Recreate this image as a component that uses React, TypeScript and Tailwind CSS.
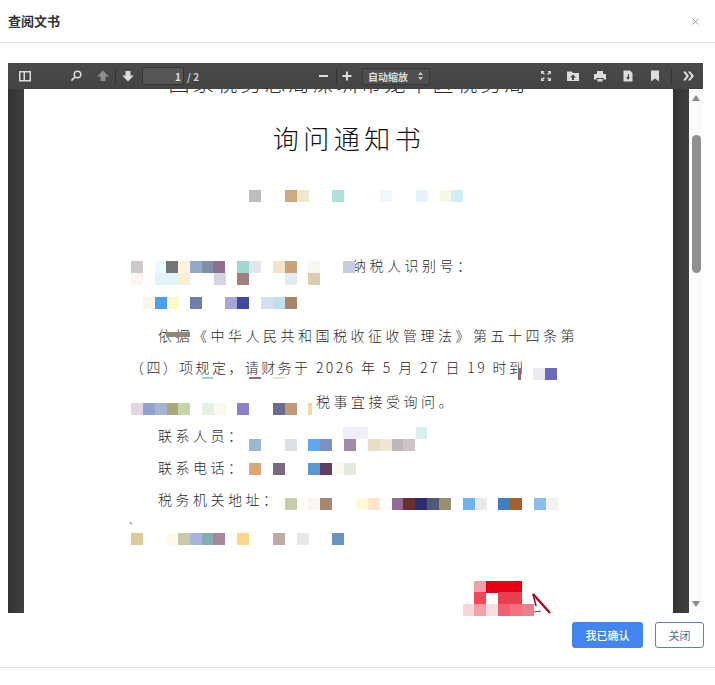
import { X } from "lucide-react";

type Block = [number, number, string, number?, number?];

// pixelated redaction over the scanned document: x, y, colour, w, h
const blocks: Block[] = [
  [249, 190, "#bdbdbd"], [285, 190, "#cfa97f"], [297, 190, "#f3e6cf"], [332, 190, "#aee0dc"],
  [380, 190, "#f0f8fb"], [416, 190, "#e6f1f8"], [440, 190, "#f8f6e4"], [451, 190, "#d0eef5"],

  [131, 261, "#cdc8cc"], [155, 261, "#e9fbfd"], [166, 261, "#757575"], [178, 261, "#fdf3e0"],
  [190, 261, "#94aacb"], [202, 261, "#7f8fa8"], [213, 261, "#8d6f92"], [237, 261, "#a0d8d0"],
  [249, 261, "#e2e6ea"], [273, 261, "#f2e4c8"], [285, 261, "#c8a27a"], [308, 261, "#f8f6f0"],
  [343, 261, "#c5cce3"],

  [131, 273, "#fdf6f0"], [155, 273, "#dff5f8"], [167, 273, "#dff5f8"], [178, 273, "#faeed8"],
  [214, 273, "#d3d5e2"], [237, 273, "#a27f7e"], [285, 273, "#e3ebf2"], [308, 273, "#dcccb0"],

  [143, 297, "#fbf6ea"], [155, 297, "#4f9df0"], [167, 297, "#fdf9c8"], [190, 297, "#6f80ab"],
  [225, 297, "#a9a5d6"], [237, 297, "#3f49a0"], [261, 297, "#d3e0f2"], [273, 297, "#bfe0ea"],
  [285, 297, "#a98468"],

  [166, 332, "#8f8a78", 24, 5],
  [202, 377, "#a6c8cf", 11, 2], [249, 377, "#9c6b70", 12, 2], [273, 377, "#e5e5d0", 12, 2],
  [518, 368, "#8a6d7a", 3], [533, 368, "#ececf0"], [545, 368, "#6a6ab8"],

  [131, 403, "#e3d5e2"], [143, 403, "#8fa4cc"], [155, 403, "#a6b4d6"], [167, 403, "#a8a878"],
  [178, 403, "#c5d5a8"], [202, 403, "#e3f0e3"], [215, 403, "#fbf9ee"], [237, 403, "#8d80c8"],
  [273, 403, "#6b6b8e"], [285, 403, "#c09878"], [308, 403, "#eedca0", 4],

  [343, 427, "#f0eef8", 25], [416, 427, "#d8f0f2", 11],
  [249, 439, "#9ab8d2"], [285, 439, "#dcdfe3"], [308, 439, "#5fa8f0"], [320, 439, "#7f90c0"],
  [344, 439, "#a58aa5"], [368, 439, "#e8dcc8"], [380, 439, "#f0e6d2"], [392, 439, "#bcb8bc"],
  [403, 439, "#cdc4c8"],

  [249, 463, "#d8a878"], [273, 463, "#7a6a80"], [308, 463, "#5b98d0"], [320, 463, "#5c3f62"],
  [333, 463, "#fdf9f0"], [344, 463, "#e5e8dc"],

  [285, 498, "#c5cbae"], [308, 498, "#fbf5f0"], [320, 498, "#a58870"], [356, 498, "#fef9dc"],
  [368, 498, "#fde4cc"], [392, 498, "#906a90"], [403, 498, "#6a3030"], [415, 498, "#2c2c70"],
  [427, 498, "#505878"], [439, 498, "#989070"], [463, 498, "#6cb4f0"], [475, 498, "#e5e8ec"],
  [498, 498, "#3f7fc0"], [510, 498, "#a85f30"], [534, 498, "#8cbcea"], [546, 498, "#f5f2ee"],

  [131, 533, "#e0c898"], [167, 533, "#fdfbe8"], [178, 533, "#c8c8ac"], [190, 533, "#a8b4dc"],
  [202, 533, "#88acb4"], [213, 533, "#a88898"], [237, 533, "#fad888"], [273, 533, "#c0aaa8"],
  [297, 533, "#e8e8e8"], [332, 533, "#6a94c0"],

  // stamp
  [474, 581, "#f0a0a8"], [486, 581, "#e60012", 36],
  [474, 592, "#f04858"], [498, 592, "#e84050"], [510, 592, "#e84050"],
  [463, 604, "#fad4d6"], [474, 604, "#f8a0a8"], [486, 604, "#fbdde0"], [498, 604, "#f06070"],
  [510, 604, "#f87080"], [522, 604, "#e88090"],
];

function Mosaic() {
  return (
    <svg className="pointer-events-none absolute left-0 top-0" width="715" height="685" aria-hidden>
      {blocks.map(([x, y, fill, w = 12, h = 12], i) => (
        <rect key={i} x={x} y={y} width={w} height={h} fill={fill} />
      ))}
      <path d="M533 594 L550 613" stroke="#a01020" strokeWidth="2.5" fill="none" />
      <path d="M533 594 L536 606" stroke="#a01020" strokeWidth="1.5" fill="none" />
      <path d="M534 612 L541 611" stroke="#55343a" strokeWidth="1" fill="none" />
    </svg>
  );
}

function Icon({ children, w = 14 }: { children: React.ReactNode; w?: number }) {
  return (
    <svg width={w} height="14" viewBox="0 0 14 14" fill="#dcdcdc" className="shrink-0">
      {children}
    </svg>
  );
}

function Toolbar() {
  return (
    <div className="flex h-[26px] shrink-0 items-center bg-gradient-to-b from-[#4a4a4a] to-[#444444] pl-[10px] pr-[8px] shadow-[0_1px_0_#9a9a9a]">
      <Icon>
        <path fillRule="evenodd" d="M1 2h12v10.500H1zM2.500 3.500v7.500h3V3.500zM7 3.500v7.500h4.500V3.500z" />
      </Icon>
      <div className="ml-[37px]">
        <Icon>
          <path d="M8.500 1.500a4 4 0 1 0 0 8 4 4 0 0 0 0-8zm0 1.500a2.500 2.500 0 1 1 0 5 2.500 2.500 0 0 1 0-5z" />
          <path d="M5.300 7.600l1.100 1.100-3.300 3.500-1.300-1.200z" />
        </Icon>
      </div>
      <div className="ml-[13px]">
        <Icon>
          <path fill="#8e8e8e" d="M7 1.500l5.800 6H9.500V12h-5V7.500H1.200z" />
        </Icon>
      </div>
      <div className="ml-[5px] h-[17px] w-px bg-[#333333]" />
      <div className="ml-[5px]">
        <Icon>
          <path d="M7 12.500l-5.800-6h3.300V2h5v4.500h3.300z" />
        </Icon>
      </div>
      <div className="ml-[7px] flex h-[18px] w-[42px] items-center justify-end rounded-[2px] border border-[#333333] bg-[#555555] pr-[2px] text-[10px] font-bold text-[#e2e2e2]">
        1
      </div>
      <span className="ml-[3px] w-[14px] text-[10px] font-bold text-[#cfcfcf]">/ 2</span>
      <div className="ml-[116px]">
        <Icon>
          <rect x="2" y="6" width="9" height="2" />
        </Icon>
      </div>
      <div className="ml-[5px] h-[17px] w-px bg-[#333333]" />
      <div className="ml-[3px]">
        <Icon>
          <path d="M6 2.500h2v3.500h3.500v2H8v3.500H6V8H2.500V6H6z" />
        </Icon>
      </div>
      <div className="ml-[8px] flex h-[17px] w-[68px] items-center justify-between rounded-[2px] border border-[#383838] bg-[#4e4e4e] pl-[5px] pr-[6px] text-[10px] font-bold text-[#dedede]">
        <span>自动缩放</span>
        <svg width="5" height="8" viewBox="0 0 5 8" fill="#c8c8c8">
          <path d="M2.500 0L5 3H0zM2.500 8L0 5h5z" />
        </svg>
      </div>
      <div className="ml-[109px]">
        <Icon>
          <path d="M2 2h3.500L4.300 3.200l1.600 1.600-1 1-1.600-1.600L2 5.500zM12 2v3.500l-1.200-1.200-1.600 1.600-1-1 1.600-1.600L8.500 2zM2 12V8.500l1.200 1.200 1.600-1.600 1 1-1.600 1.600L5.500 12zM12 12H8.500l1.200-1.200-1.600-1.600 1-1 1.600 1.600L12 8.500z" />
        </Icon>
      </div>
      <div className="ml-[13px]">
        <Icon>
          <path d="M1 2.500h5l1 1.500h6v8H1zM7 5.500L4 8.500h2V11h2V8.500h2z" fillRule="evenodd" />
        </Icon>
      </div>
      <div className="ml-[13px]">
        <Icon>
          <path d="M4 2h6v3H4zM1 6c0-.5.5-1 1-1h10c.5 0 1 .5 1 1v4.500h-2.500V9h-7v1.500H1zM4.500 10h5v2.500h-5z" />
        </Icon>
      </div>
      <div className="ml-[14px]">
        <Icon>
          <path fillRule="evenodd" d="M2.500 1.500h6.500l2.500 2.500v8.500h-9zM7 5v3H5l2 3 2-3H8V5z" />
        </Icon>
      </div>
      <div className="ml-[13px]">
        <Icon>
          <path d="M3 1.500h8V12.500L7 9.500l-4 3z" />
        </Icon>
      </div>
      <div className="ml-[9px] h-[17px] w-px bg-[#333333]" />
      <div className="ml-[9px]">
        <Icon>
          <path d="M2 2.500h2.500L8 7l-3.500 4.500H2L5.300 7zM6.800 2.500h2.500L13 7l-3.700 4.500H6.800L10.300 7z" />
        </Icon>
      </div>
    </div>
  );
}

function Scrollbar() {
  return (
    <div className="flex w-[14px] shrink-0 flex-col items-center bg-[#fbfbfb] px-[3px]">
      <svg width="8" height="6" viewBox="0 0 8 6" fill="#8a8a8a" className="mt-[6px] shrink-0">
        <path d="M4 0l4 6H0z" />
      </svg>
      <div className="mt-[34px] h-[138px] w-[9px] shrink-0 rounded-full bg-[#909090]" />
      <svg width="8" height="6" viewBox="0 0 8 6" fill="#8a8a8a" className="mt-auto mb-[6px] shrink-0">
        <path d="M4 6L0 0h8z" />
      </svg>
    </div>
  );
}

function Gutter() {
  return <div className="w-[16px] shrink-0 bg-gradient-to-r from-[#333333] to-[#404040]" />;
}

function DocumentPage() {
  return (
    <div className="flex min-w-0 flex-1 flex-col overflow-hidden bg-white font-light text-[#2a2a2a]">
      <div className="flex h-[5px] shrink-0 items-end justify-center overflow-hidden text-[21px] leading-[24px] tracking-[3px] whitespace-nowrap">
        国家税务总局深圳市龙华区税务局
      </div>
      <h2 className="mt-[26px] shrink-0 pl-[1px] text-center text-[26px] leading-[36px] font-light tracking-[4.5px] text-[#111111]">
        询问通知书
      </h2>
      <div className="mt-[99px] pl-[328px] text-[14px] leading-[20px] tracking-[3.5px]">{"纳税人识别号\uFF1A"}</div>
      <div className="mt-[50px] pl-[134px] text-[14px] leading-[20px] tracking-[3.5px] whitespace-nowrap">
        依据《中华人民共和国税收征收管理法》第五十四条第
      </div>
      <div className="mt-[12px] flex pl-[106px] text-[14px] leading-[20px] tracking-[2.4px] whitespace-nowrap">
        {"\uFF08四\uFF09项规定\uFF0C请财务于 2026 年 5 月 27 日 19 时到"}
      </div>
      <div className="mt-[14px] pl-[292px] text-[14px] leading-[20px] tracking-[3.5px]">税事宜接受询问。</div>
      <div className="mt-[14px] pl-[134px] text-[14px] leading-[20px] tracking-[3.5px]">{"联系人员\uFF1A"}</div>
      <div className="mt-[12px] pl-[134px] text-[14px] leading-[20px] tracking-[3.5px]">{"联系电话\uFF1A"}</div>
      <div className="mt-[12px] pl-[134px] text-[14px] leading-[20px] tracking-[3.5px]">{"税务机关地址\uFF1A"}</div>
      <div className="mt-[1px] pl-[105px] text-[10px] leading-[20px]">、</div>
    </div>
  );
}

export default function App() {
  return (
    <div
      className="relative flex h-[685px] w-[715px] flex-col overflow-hidden bg-white"
      style={{ fontFamily: '"Noto Sans CJK SC", "Liberation Sans", sans-serif' }}
    >
      <header className="flex h-[43px] shrink-0 items-center justify-between border-b border-[#e3e3e3] pl-[8px] pr-[14px]">
        <h1 className="text-[13px] font-bold text-[#333333]">查阅文书</h1>
        <X size={11} strokeWidth={1.5} className="text-[#777777]" />
      </header>

      <main className="mx-[8px] mt-[20px] flex h-[550px] w-[695px] shrink-0 flex-col">
        <Toolbar />
        <div className="flex min-h-0 flex-1">
          <Gutter />
          <DocumentPage />
          <Gutter />
          <Scrollbar />
        </div>
      </main>

      <footer className="mt-[9px] flex justify-end gap-[12px] pr-[11px]">
        <button className="h-[26px] w-[71px] rounded-[3px] bg-[#4285ee] text-[11px] font-medium text-white">
          我已确认
        </button>
        <button className="h-[26px] w-[49px] rounded-[3px] border border-[#5d83ad] bg-white text-[11px] text-[#4a6f99]">
          关闭
        </button>
      </footer>
      <div className="mt-[19px] h-px shrink-0 bg-[#e3e3e3]" />

      <Mosaic />
    </div>
  );
}
